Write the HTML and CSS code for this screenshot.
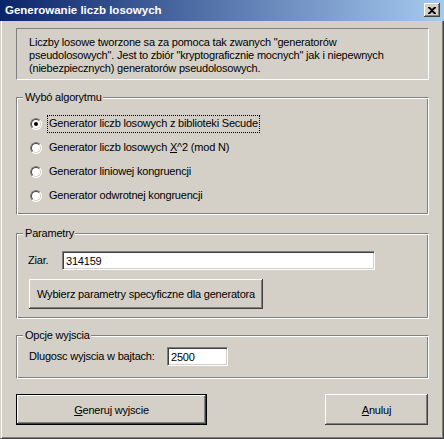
FILE: index.html
```html
<!DOCTYPE html>
<html lang="pl">
<head>
<meta charset="utf-8">
<title>Generowanie liczb losowych</title>
<link rel="stylesheet" href="styles.css">
</head>
<body>
<div class="window">
  <div class="titlebar">
    <span class="title">Generowanie liczb losowych</span>
    <span class="close">
      <svg width="8" height="7" viewBox="0 0 8 7"><path d="M0 0h2l2 2 2-2h2v1L5 3.5 8 6v1H6L4 5 2 7H0V6l3-2.5L0 1z" fill="#000"/></svg>
    </span>
  </div>
  <div class="client">
    <div class="info">Liczby losowe tworzone sa za pomoca tak zwanych "generatorów pseudolosowych". Jest to zbiór "kryptograficznie mocnych" jak i niepewnych (niebezpiecznych) generatorów pseudolosowych.</div>

    <div class="group g-algo">
      <span class="caption">Wybó algorytmu</span>
      <div class="radio-row"><span class="radio checked"></span><span class="rlabel focus">Generator liczb losowych z biblioteki Secude</span></div>
      <div class="radio-row"><span class="radio"></span><span class="rlabel">Generator liczb losowych <u>X</u>^2 (mod N)</span></div>
      <div class="radio-row"><span class="radio"></span><span class="rlabel">Generator liniowej kongruencji</span></div>
      <div class="radio-row"><span class="radio"></span><span class="rlabel">Generator odwrotnej kongruencji</span></div>
    </div>

    <div class="group g-params">
      <span class="caption">Parametry</span>
      <div class="field-row">
        <span class="lbl lbl-seed">Ziar.</span>
        <span class="edit edit-seed">314159</span>
      </div>
      <span class="btn btn-spec">Wybierz parametry specyficzne dla generatora</span>
    </div>

    <div class="group g-out">
      <span class="caption">Opcje wyjscia</span>
      <div class="field-row">
        <span class="lbl lbl-len">Dlugosc wyjscia w bajtach:</span>
        <span class="edit edit-len">2500</span>
      </div>
    </div>

    <div class="actions">
      <span class="btn btn-default"><span><u>G</u>eneruj wyjscie</span></span>
      <span class="btn btn-cancel"><u>A</u>nuluj</span>
    </div>
  </div>
</div>
</body>
</html>
```
FILE: styles.css
```css
* { box-sizing: border-box; }
html, body { margin: 0; padding: 0; }
body {
  background: #D4D0C8;
  font-family: "Liberation Sans", Arial, sans-serif;
  font-size: 11px;
  letter-spacing: -0.2px;
  color: #000;
}
.window {
  width: 444px;
  height: 439px;
  background: #D4D0C8;
  border-left: 1px solid #D4D0C8;
  border-right: 1px solid #404040;
  border-bottom: 1px solid #404040;
  box-shadow: inset 1px 0 #fff, inset -1px -1px #808080;
  display: flex;
  flex-direction: column;
}
.titlebar {
  height: 21px;
  margin-left: -1px;
  margin-right: -1px;
  background: linear-gradient(to right, #0A246A, #A6CAF0);
  display: flex;
  align-items: center;
  justify-content: space-between;
  padding: 0 4px 1px 5px;
}
.title {
  color: #fff;
  font-weight: bold;
  font-size: 11.5px;
  letter-spacing: 0;
}
.close {
  width: 16px;
  height: 14px;
  background: #D4D0C8;
  box-shadow: inset -1px -1px #404040, inset 1px 1px #fff, inset -2px -2px #808080;
  display: flex;
  align-items: center;
  justify-content: center;
  padding-right: 1px;
}
.close svg { display: block; }
.client {
  flex: 1;
  padding: 7px 14px 0 15px;
  display: flex;
  flex-direction: column;
}
.info {
  height: 52px;
  border: 1px solid;
  border-color: #808080 #fff #fff #808080;
  padding: 7px 12px 0 12px;
  line-height: 13px;
}
.group {
  position: relative;
  border: 1px solid;
  border-color: #808080 #fff #fff #808080;
  box-shadow: inset 1px 1px #fff, inset -1px -1px #808080;
}
.caption {
  position: absolute;
  top: -7px;
  left: 6px;
  padding: 0 1px 0 2px;
  background: #D4D0C8;
  line-height: 13px;
}
.g-algo {
  margin-top: 17px;
  height: 118px;
  padding: 14px 0 0 13px;
}
.radio-row {
  height: 24px;
  display: flex;
  align-items: center;
}
.radio {
  position: relative;
  width: 12px;
  height: 12px;
  border-radius: 50%;
  border: 1px solid;
  border-color: #808080 #fff #fff #808080;
  background: #fff;
  flex: none;
}
.radio::before {
  content: "";
  position: absolute;
  inset: 0;
  border-radius: 50%;
  border: 1px solid;
  border-color: #404040 #D4D0C8 #D4D0C8 #404040;
}
.radio.checked::after {
  content: "";
  position: absolute;
  left: 3px;
  top: 3px;
  width: 4px;
  height: 4px;
  border-radius: 50%;
  background: #000;
}
.rlabel {
  margin-left: 5px;
  padding: 1px 1px 2px 1px;
  border: 1px solid transparent;
  line-height: 13px;
}
.rlabel.focus {
  border: 1px dotted #000;
}
.g-params {
  margin-top: 18px;
  height: 86px;
  padding: 17px 0 0 11px;
}
.field-row {
  display: flex;
  align-items: center;
}
.lbl { line-height: 13px; }
.lbl-seed { width: 34px; }
.edit {
  display: block;
  height: 19px;
  background: #fff;
  border: 1px solid;
  border-color: #808080 #fff #fff #808080;
  box-shadow: inset 1px 1px #404040, inset -1px -1px #D4D0C8;
  padding: 2px 3px 0 3px;
  line-height: 14px;
}
.edit-seed { width: 313px; }
.btn {
  display: flex;
  align-items: center;
  justify-content: center;
  background: #D4D0C8;
  box-shadow: inset -1px -1px #404040, inset 1px 1px #fff, inset -2px -2px #808080;
}
.btn-spec {
  margin: 9px 0 0 1px;
  width: 234px;
  height: 30px;
}
.g-out {
  margin-top: 16px;
  height: 44px;
  padding: 11px 0 0 12px;
}
.lbl-len { width: 138px; }
.edit-len { width: 61px; }
.actions {
  margin-top: 15px;
  display: flex;
  justify-content: space-between;
  padding-right: 1px;
}
.btn-default {
  width: 191px;
  height: 31px;
  border: 1px solid #000;
}
.btn-cancel {
  width: 103px;
  height: 31px;
}
u { text-decoration: underline; text-underline-offset: 1px; }
```
